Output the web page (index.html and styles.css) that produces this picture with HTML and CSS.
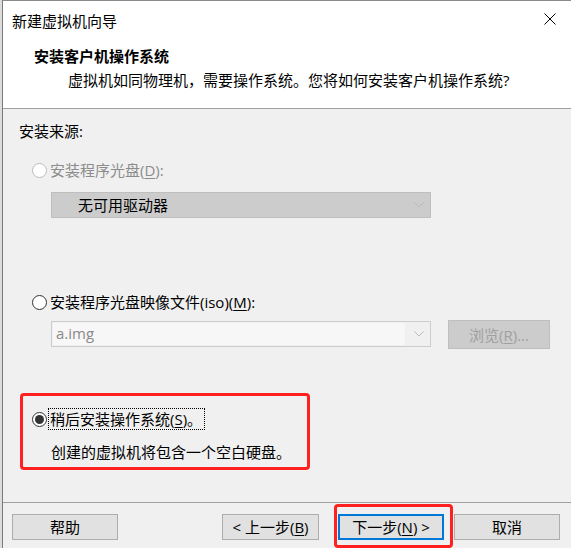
FILE: index.html
```html
<!DOCTYPE html>
<html lang="zh-CN">
<head>
<meta charset="utf-8">
<title>新建虚拟机向导</title>
<link rel="stylesheet" href="styles.css">
</head>
<body>
<div class="desk">
  <div class="strip"></div>
  <div class="window">
    <div class="titlebar">
      <span class="title">新建虚拟机向导</span>
      <span class="close">
        <svg width="12" height="12" viewBox="0 0 12 12"><path d="M0.5 0.5 L11.5 11.5 M11.5 0.5 L0.5 11.5" stroke="#000" stroke-width="1" fill="none"/></svg>
      </span>
    </div>
    <div class="header">
      <div class="h-title">安装客户机操作系统</div>
      <div class="h-sub">虚拟机如同物理机，需要操作系统。您将如何安装客户机操作系统?</div>
    </div>
    <div class="content">
      <div class="src-label">安装来源:</div>

      <div class="opt opt1 disabled">
        <span class="radio"></span>
        <span class="lbl">安装程序光盘(<u>D</u>):</span>
      </div>
      <div class="combo combo-dis">
        <span class="combo-text">无可用驱动器</span>
        <span class="chev"><svg width="10" height="6" viewBox="0 0 10 6"><path d="M0.5 0.5 L5 5 L9.5 0.5" stroke="#b9b9b9" fill="none"/></svg></span>
      </div>

      <div class="opt opt2">
        <span class="radio"></span>
        <span class="lbl">安装程序光盘映像文件(iso)(<u>M</u>):</span>
      </div>
      <div class="iso-row">
        <div class="combo combo-iso">
          <span class="iso-field">a.img</span>
          <span class="chev"><svg width="10" height="6" viewBox="0 0 10 6"><path d="M0.5 0.5 L5 5 L9.5 0.5" stroke="#b9b9b9" fill="none"/></svg></span>
        </div>
        <div class="btn btn-dis">浏览(<u>R</u>)...</div>
      </div>

      <div class="opt opt3">
        <span class="radio checked"></span>
        <span class="lbl focus">稍后安装操作系统(<u>S</u>)。</span>
      </div>
      <div class="desc">创建的虚拟机将包含一个空白硬盘。</div>
      <div class="mark mark-later"></div>
    </div>
    <div class="footer">
      <div class="btn">帮助</div>
      <div class="spacer"></div>
      <div class="btn btn-back">&lt; 上一步(<u>B</u>)</div>
      <div class="btn btn-default">下一步(<u>N</u>) &gt;<span class="mark mark-next"></span></div>
      <div class="btn">取消</div>
    </div>
  </div>
</div>
</body>
</html>
```
FILE: styles.css
```css
* { box-sizing: border-box; }
html, body { margin: 0; padding: 0; }
body {
  width: 571px;
  height: 548px;
  overflow: hidden;
  background: #f0f0f0;
  font-family: "Open Sans", "Noto Sans CJK SC", sans-serif;
  font-size: 15px;
  color: #000;
}
u { text-decoration: underline; text-underline-offset: 2px; }

.desk { display: flex; height: 548px; }
.strip { width: 2px; background: #dcdcdc; flex: none; }
.window {
  flex: 1;
  display: flex;
  flex-direction: column;
  border-left: 1px solid #7a7a7a;
  border-top: 1px solid #8a8a8a;
  background: #f0f0f0;
}

.titlebar {
  height: 37px;
  background: #fff;
  display: flex;
  align-items: center;
  padding-left: 9px;
  line-height: 20px;
}
.title { padding-top: 2px; font-family: "Noto Sans CJK SC", sans-serif; }
.close {
  margin-left: auto;
  margin-right: 15px;
  width: 12px;
  height: 12px;
  display: flex;
  margin-top: -1px;
}

.header {
  height: 71px;
  background: #fff;
  border-bottom: 1px solid #a0a0a0;
  padding-top: 8px;
  line-height: 20px;
}
.h-title {
  font-weight: bold;
  padding-left: 31px;
  font-family: "Noto Sans CJK SC", sans-serif;
}
.h-sub {
  margin-top: 4px;
  padding-left: 65px;
}

.content {
  flex: 1;
  position: relative;
  padding: 12px 0 0 16px;
  line-height: 20px;
}
.src-label { height: 20px; }

.opt { display: flex; align-items: center; height: 20px; }
.opt1 { margin-top: 19px; }
.opt2 { margin-top: 74px; }
.opt3 { margin-top: 60px; }
.radio {
  width: 15px;
  height: 15px;
  border-radius: 50%;
  border: 1px solid #333;
  background: #fff;
  margin-left: 13px;
  margin-right: 2px;
  flex: none;
  display: flex;
  align-items: center;
  justify-content: center;
}
.disabled .radio { border-color: #bcbcbc; }
.disabled .lbl { color: #8c8c8c; }
.radio.checked::after {
  content: "";
  width: 9px;
  height: 9px;
  border-radius: 50%;
  background: #333;
}
.lbl { padding: 0 2px 0 1px; }
.lbl.focus { outline: 1px dotted #000; outline-offset: 0; }

.combo {
  height: 26px;
  width: 380px;
  margin-left: 32px;
  display: flex;
  align-items: center;
  position: relative;
}
.combo-dis {
  margin-top: 12px;
  background: #cccccc;
  border: 1px solid #bfbfbf;
  padding-left: 26px;
}
.chev { position: absolute; right: 6px; top: 9px; display: flex; }

.iso-row { display: flex; margin-top: 8px; align-items: flex-start; }
.combo-iso {
  margin-top: 1px;
  border: 1px solid #cccccc;
  background: #f0f0f0;
  padding: 1px;
}
.iso-field {
  background: #f7f7f7;
  height: 22px;
  width: 352px;
  color: #8a8a8a;
  padding-left: 3px;
  line-height: 21px;
}
.btn {
  height: 26px;
  width: 106px;
  background: #e1e1e1;
  border: 1px solid #adadad;
  display: flex;
  align-items: center;
  justify-content: center;
  position: relative;
  line-height: 20px;
}
.btn-dis {
  margin-left: 17px;
  width: 102px;
  height: 29px;
  background: #cccccc;
  border-color: #bfbfbf;
  color: #a0a0a0;
}
.btn-back { width: 97px; }
.btn-default { border: 2px solid #0078d7; }

.desc { margin-top: 13px; margin-left: 32px; }

.mark {
  position: absolute;
  border: 3px solid #ff2020;
  border-radius: 4px;
  pointer-events: none;
}
.mark-later { left: 17px; top: 284px; width: 290px; height: 77px; }
.mark-next { left: -6px; top: -12px; width: 119px; height: 44px; }

.footer {
  height: 46px;
  border-top: 1px solid #a0a0a0;
  display: flex;
  align-items: flex-start;
  padding: 11px 0 0 9px;
  gap: 10px;
}
.footer .spacer { width: 84px; flex: none; }
.footer .btn-default { margin-left: 9px; }
```
